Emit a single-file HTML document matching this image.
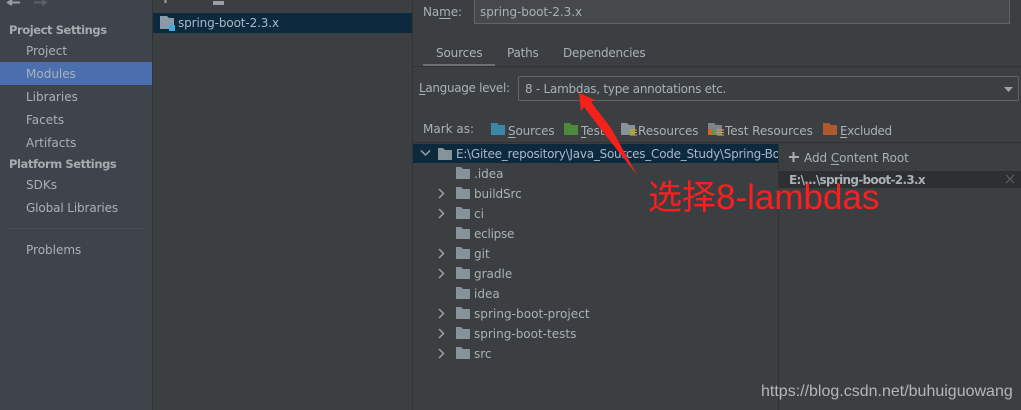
<!DOCTYPE html>
<html>
<head>
<meta charset="utf-8">
<style>
html,body{margin:0;padding:0;background:#3c3f41}
#r{position:relative;width:1021px;height:410px;overflow:hidden;background:#3c3f41;font-family:"DejaVu Sans","Liberation Sans",sans-serif;font-size:12px;color:#a9b1b8}
.t{position:absolute;white-space:nowrap;line-height:16px}
.b{position:absolute}
u{text-decoration:underline;text-underline-offset:2px}
.h{font-weight:bold;color:#a8abad;font-size:11.5px;letter-spacing:-.42px}
</style>
</head>
<body>
<div id="r">
<!-- sidebar -->
<div class="b" style="left:0;top:0;width:152px;height:410px;background:#3f434c"></div>
<div class="b" style="left:152px;top:0;width:1px;height:410px;background:#323232"></div>
<div class="b" style="left:0;top:62px;width:152px;height:23px;background:#4b6eaf"></div>
<svg class="b" style="left:0;top:0" width="60" height="8"><path d="M8 2.500H20M12 0L8 2.500L12 5" fill="none" stroke="#9a9da0" stroke-width="2"/><path d="M34 2.500H46M42 0L46 2.500L42 5" fill="none" stroke="#5c5f63" stroke-width="2"/></svg>
<div class="t h" style="left:9px;top:22px">Project Settings</div>
<div class="t" style="left:26px;top:43px">Project</div>
<div class="t" style="left:26px;top:66px">Modules</div>
<div class="t" style="left:26px;top:89px">Libraries</div>
<div class="t" style="left:26px;top:112px">Facets</div>
<div class="t" style="left:26px;top:135px">Artifacts</div>
<div class="t h" style="left:9px;top:156px">Platform Settings</div>
<div class="t" style="left:26px;top:177px">SDKs</div>
<div class="t" style="left:26px;top:200px;letter-spacing:-.12px">Global Libraries</div>
<div class="b" style="left:9px;top:228px;width:134px;height:1px;background:#4c4d4f"></div>
<div class="t" style="left:26px;top:242px">Problems</div>

<!-- module list -->
<div class="b" style="left:153px;top:13px;width:259px;height:20px;background:#0d293e"></div>
<div class="b" style="left:412px;top:0;width:1px;height:410px;background:#323232"></div>
<svg class="b" style="left:160px;top:0" width="70" height="8"><path d="M5.500 0V3" stroke="#a0a4a8" stroke-width="2"/><path d="M53 1H64V5H53z" fill="#9a9ea2"/></svg>
<svg class="b" style="left:160px;top:16px" width="16" height="16"><path d="M0 0H7L9 2H14V13H0z" fill="#8a9aa6"/><rect x="9" y="9" width="6" height="6" fill="#3dabde"/></svg>
<div class="t" style="left:178px;top:15px;color:#a9b7c6;letter-spacing:-.12px">spring-boot-2.3.x</div>

<!-- name -->
<div class="t" style="left:423px;top:4px;letter-spacing:-.1px">Na<u>m</u>e:</div>
<div class="b" style="left:474px;top:-1px;width:534px;height:23px;background:#45494a;border:1px solid #646464"></div>
<div class="t" style="left:480px;top:4px;color:#a9b1b8;letter-spacing:-.06px">spring-boot-2.3.x</div>

<!-- tabs -->
<div class="t" style="left:436px;top:45px;letter-spacing:-.15px">Sources</div>
<div class="t" style="left:507px;top:45px;letter-spacing:-.2px">Paths</div>
<div class="t" style="left:563px;top:45px;letter-spacing:-.25px">Dependencies</div>
<div class="b" style="left:423px;top:64px;width:72px;height:3px;background:#6c7176"></div>
<div class="b" style="left:413px;top:66px;width:608px;height:1px;background:#323232"></div>

<!-- language level -->
<div class="t" style="left:419px;top:80px;letter-spacing:-.33px"><u>L</u>anguage level:</div>
<div class="b" style="left:518px;top:76px;width:499px;height:23px;border:1px solid #646464;border-radius:2px"></div>
<div class="t" style="left:525px;top:81px;letter-spacing:-.26px">8 - Lambdas, type annotations etc.</div>
<svg class="b" style="left:1003px;top:86px" width="11" height="7"><path d="M1 1H10L5.500 6z" fill="#a0a3a6"/></svg>

<!-- mark as -->
<div class="t" style="left:423px;top:121px">Mark as:</div>
<svg class="b" style="left:491px;top:122px" width="15" height="14"><path d="M0 1H6L8 3H14V13H0z" fill="#3a87a8"/></svg>
<div class="t" style="left:508px;top:123px;letter-spacing:-.15px"><u>S</u>ources</div>
<svg class="b" style="left:564px;top:122px" width="15" height="14"><path d="M0 1H6L8 3H14V13H0z" fill="#4f8a3c"/></svg>
<div class="t" style="left:581px;top:123px"><u>T</u>ests</div>
<svg class="b" style="left:621px;top:122px" width="17" height="15"><path d="M0 1H6L8 3H14V13H0z" fill="#8a9299"/><path d="M9 8H16M9 10.500H16M9 13H16" stroke="#d6a24a" stroke-width="1"/></svg>
<div class="t" style="left:638px;top:123px;letter-spacing:-.1px">Resources</div>
<svg class="b" style="left:708px;top:122px" width="17" height="15"><path d="M0 1H6L8 3H14V13H0z" fill="#7d858b"/><path d="M9 8H16M9 10.500H16M9 13H16" stroke="#d6a24a" stroke-width="1"/><path d="M0 7H4V13H0z" fill="#d0642c"/><path d="M4 7H7V13H4z" fill="#5a9a3c"/></svg>
<div class="t" style="left:725px;top:123px;letter-spacing:-.07px">Test Resources</div>
<svg class="b" style="left:823px;top:122px" width="15" height="14"><path d="M0 1H6L8 3H14V13H0z" fill="#ad5a2e"/></svg>
<div class="t" style="left:840px;top:123px;letter-spacing:-.35px"><u>E</u>xcluded</div>
<div class="b" style="left:413px;top:142px;width:608px;height:1px;background:#323232"></div>

<!-- tree -->
<div class="b" style="left:413px;top:144px;width:365px;height:19px;background:#0d293e"></div>
<div class="b" style="left:778px;top:143px;width:1px;height:267px;background:#323232"></div>
<svg class="b" style="left:420px;top:149px" width="12" height="9"><path d="M1 1.500L5.500 6L10 1.500" fill="none" stroke="#9da2a6" stroke-width="1.500"/></svg>
<svg class="b" style="left:438px;top:147px" width="14" height="14"><path d="M0 1H5L7 3H14V13H0z" fill="#87939a"/></svg>
<div class="b" style="left:456px;top:146px;width:322px;height:16px;overflow:hidden"><div class="t" style="left:0;top:0;color:#a9b7c6;letter-spacing:-.25px">E:\Gitee_repository\Java_Sources_Code_Study\Spring-Boot</div></div>

<svg class="b" style="left:436px;top:166px" width="20" height="200">
<g fill="none" stroke="#9da2a6" stroke-width="1.500">
<path d="M3 23L7.500 27.500L3 32"/><path d="M3 43L7.500 47.500L3 52"/>
<path d="M3 83L7.500 87.500L3 92"/><path d="M3 103L7.500 107.500L3 112"/>
<path d="M3 143L7.500 147.500L3 152"/><path d="M3 163L7.500 167.500L3 172"/><path d="M3 183L7.500 187.500L3 192"/>
</g>
</svg>
<svg class="b" style="left:456px;top:166px" width="14" height="200"><g fill="#87939a">
<path d="M0 1H5L7 3H14V13H0z"/>
<path d="M0 21H5L7 23H14V33H0z"/>
<path d="M0 41H5L7 43H14V53H0z"/>
<path d="M0 61H5L7 63H14V73H0z"/>
<path d="M0 81H5L7 83H14V93H0z"/>
<path d="M0 101H5L7 103H14V113H0z"/>
<path d="M0 121H5L7 123H14V133H0z"/>
<path d="M0 141H5L7 143H14V153H0z"/>
<path d="M0 161H5L7 163H14V173H0z"/>
<path d="M0 181H5L7 183H14V193H0z"/>
</g></svg>
<div class="t" style="left:474px;top:166px">.idea</div>
<div class="t" style="left:474px;top:186px;letter-spacing:-.1px">buildSrc</div>
<div class="t" style="left:474px;top:206px">ci</div>
<div class="t" style="left:474px;top:226px;letter-spacing:-.25px">eclipse</div>
<div class="t" style="left:474px;top:246px">git</div>
<div class="t" style="left:474px;top:266px">gradle</div>
<div class="t" style="left:474px;top:286px">idea</div>
<div class="t" style="left:474px;top:306px;letter-spacing:.05px">spring-boot-project</div>
<div class="t" style="left:474px;top:326px">spring-boot-tests</div>
<div class="t" style="left:474px;top:346px">src</div>

<!-- right panel -->
<svg class="b" style="left:788px;top:151px" width="12" height="12"><path d="M5.500 1V11M1 6H11" stroke="#a9adb0" stroke-width="2"/></svg>
<div class="t" style="left:804px;top:150px;letter-spacing:-.06px">Add <u>C</u>ontent Root</div>
<div class="b" style="left:779px;top:171px;width:242px;height:17px;background:#2e2f30"></div>
<div class="t" style="left:789px;top:172px;font-weight:bold;color:#a9b1b8;letter-spacing:-.7px">E:\...\spring-boot-2.3.x</div>
<svg class="b" style="left:1005px;top:174px" width="10" height="10"><path d="M1 1L9 9M9 1L1 9" stroke="#5f6266" stroke-width="1"/></svg>

<!-- annotation -->
<svg class="b" style="left:0;top:0" width="1021" height="410"><path d="M579 93L595 100L591 102L611 128L637 175L600 128L584 107L581 111z" fill="#f5221b"/></svg>
<div class="t" style="left:648px;top:180px;font-family:'Liberation Sans','Noto Sans CJK SC',sans-serif;font-size:34px;line-height:36px;color:#fb1f1f">选择<span style="font-size:35px">8-lambdas</span></div>

<!-- watermark -->
<div class="t" style="left:761px;top:383px;font-family:'Liberation Sans',sans-serif;font-size:16px;line-height:18px;color:#b4b6b8">https://blog.csdn.net/buhuiguowang</div>
</div>
</body>
</html>
